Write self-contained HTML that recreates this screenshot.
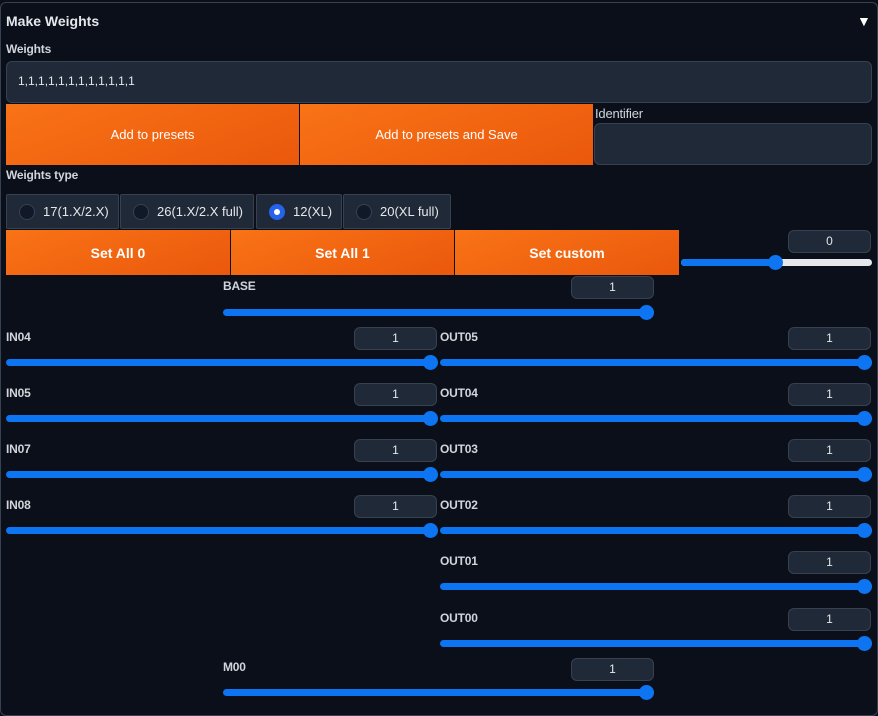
<!DOCTYPE html>
<html><head><meta charset="utf-8"><style>
*{box-sizing:border-box;margin:0;padding:0}
body{width:878px;height:716px;background:#0b0f19;font-family:"Liberation Sans",sans-serif;color:#e5e7eb;position:relative;overflow:hidden}
.panel{position:absolute;left:0;top:2px;width:878px;height:714px;border:1px solid #374151;border-radius:6px}
.a{position:absolute}
.lbl{position:absolute;font-size:12px;font-weight:bold;color:#d1d5db;letter-spacing:-0.2px}
.inp{position:absolute;background:#1f2937;border:1px solid #374151;border-radius:6px}
.btn{position:absolute;background:linear-gradient(160deg,#f97316,#ea580c);color:#fff;display:flex;align-items:center;justify-content:center;font-size:13px}
.big{font-size:14px;font-weight:bold}
.num{position:absolute;width:83px;height:23px;background:#1f2937;border:1px solid #374151;border-radius:6px;font-size:12px;text-align:center;line-height:21px;color:#e5e7eb}
.tr{position:absolute;height:7px;border-radius:4px;background:#0d74f2}
.th{position:absolute;width:15px;height:15px;border-radius:50%;background:#0d74f2}
.radio{position:absolute;top:194px;height:35px;background:#1f2937;border:1px solid #374151;border-radius:2px;font-size:13px;display:flex;align-items:center;padding-left:12px;color:#e5e7eb}
.rc{width:16px;height:16px;border-radius:50%;border:1px solid #374151;background:#111827;margin-right:8px}
.rc.on{background:#2563eb;border-color:#2563eb;display:flex;align-items:center;justify-content:center}
.rc.on:after{content:"";width:6px;height:6px;border-radius:50%;background:#fff}
</style></head><body>
<div class="panel"></div>
<div class="a" style="left:6px;top:13px;font-size:14px;font-weight:bold;color:#e5e7eb">Make Weights</div>
<div class="a" style="left:857px;top:13px;font-size:14px;color:#fff">▼</div>
<div class="lbl" style="left:6px;top:42px">Weights</div>
<div class="inp" style="left:6px;top:61px;width:866px;height:42px"><span class="a" style="left:11px;top:12px;font-size:12px;color:#e5e7eb">1,1,1,1,1,1,1,1,1,1,1,1</span></div>
<div class="btn" style="left:6px;top:104px;width:293px;height:61px">Add to presets</div>
<div class="btn" style="left:300px;top:104px;width:293px;height:61px">Add to presets and Save</div>
<div class="lbl" style="left:595px;top:106px;font-weight:normal;font-size:13px">Identifier</div>
<div class="inp" style="left:594px;top:123px;width:278px;height:42px"></div>
<div class="lbl" style="left:6px;top:168px">Weights type</div>
<div class="radio" style="left:6px;width:113px"><div class="rc"></div>17(1.X/2.X)</div>
<div class="radio" style="left:120px;width:134px"><div class="rc"></div>26(1.X/2.X full)</div>
<div class="radio" style="left:256px;width:86px"><div class="rc on"></div>12(XL)</div>
<div class="radio" style="left:343px;width:108px"><div class="rc"></div>20(XL full)</div>
<div class="btn big" style="left:6px;top:230px;width:224px;height:45px">Set All 0</div>
<div class="btn big" style="left:231px;top:230px;width:223px;height:45px">Set All 1</div>
<div class="btn big" style="left:455px;top:230px;width:224px;height:45px">Set custom</div>
<div class="num" style="left:788px;top:230px">0</div>
<div class="tr" style="left:681px;top:259px;width:191px;background:#e5e7eb"></div>
<div class="tr" style="left:681px;top:259px;width:96px"></div>
<div class="th" style="left:768px;top:255px"></div>

<div class="lbl" style="left:223px;top:279px">BASE</div>
<div class="num" style="left:571px;top:276px">1</div>
<div class="tr" style="left:223px;top:309px;width:431px"></div><div class="th" style="left:639px;top:305px"></div>

<div class="lbl" style="left:6px;top:330px">IN04</div><div class="num" style="left:354px;top:327px">1</div>
<div class="tr" style="left:6px;top:359px;width:431px"></div><div class="th" style="left:423px;top:355px"></div>
<div class="lbl" style="left:440px;top:330px">OUT05</div><div class="num" style="left:788px;top:327px">1</div>
<div class="tr" style="left:440px;top:359px;width:432px"></div><div class="th" style="left:857px;top:355px"></div>

<div class="lbl" style="left:6px;top:386px">IN05</div><div class="num" style="left:354px;top:383px">1</div>
<div class="tr" style="left:6px;top:415px;width:431px"></div><div class="th" style="left:423px;top:411px"></div>
<div class="lbl" style="left:440px;top:386px">OUT04</div><div class="num" style="left:788px;top:383px">1</div>
<div class="tr" style="left:440px;top:415px;width:432px"></div><div class="th" style="left:857px;top:411px"></div>

<div class="lbl" style="left:6px;top:442px">IN07</div><div class="num" style="left:354px;top:439px">1</div>
<div class="tr" style="left:6px;top:471px;width:431px"></div><div class="th" style="left:423px;top:467px"></div>
<div class="lbl" style="left:440px;top:442px">OUT03</div><div class="num" style="left:788px;top:439px">1</div>
<div class="tr" style="left:440px;top:471px;width:432px"></div><div class="th" style="left:857px;top:467px"></div>

<div class="lbl" style="left:6px;top:498px">IN08</div><div class="num" style="left:354px;top:495px">1</div>
<div class="tr" style="left:6px;top:527px;width:431px"></div><div class="th" style="left:423px;top:523px"></div>
<div class="lbl" style="left:440px;top:498px">OUT02</div><div class="num" style="left:788px;top:495px">1</div>
<div class="tr" style="left:440px;top:527px;width:432px"></div><div class="th" style="left:857px;top:523px"></div>

<div class="lbl" style="left:440px;top:554px">OUT01</div><div class="num" style="left:788px;top:551px">1</div>
<div class="tr" style="left:440px;top:583px;width:432px"></div><div class="th" style="left:857px;top:579px"></div>

<div class="lbl" style="left:440px;top:611px">OUT00</div><div class="num" style="left:788px;top:608px">1</div>
<div class="tr" style="left:440px;top:640px;width:432px"></div><div class="th" style="left:857px;top:636px"></div>

<div class="lbl" style="left:223px;top:660px">M00</div>
<div class="num" style="left:571px;top:658px">1</div>
<div class="tr" style="left:223px;top:689px;width:431px"></div><div class="th" style="left:639px;top:685px"></div>
</body></html>
